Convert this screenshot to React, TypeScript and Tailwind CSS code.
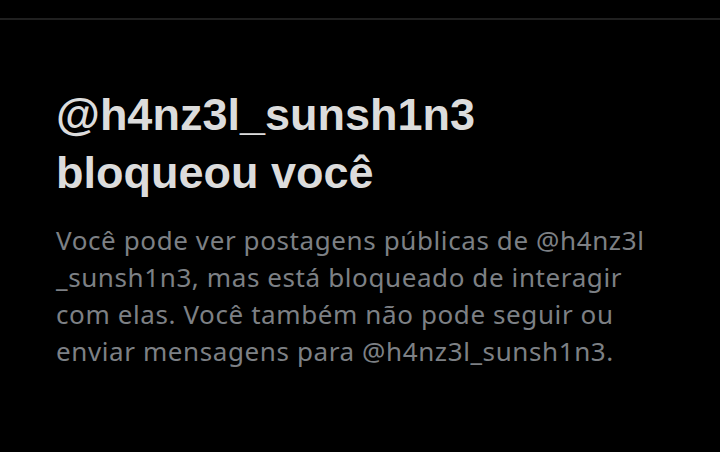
export default function App() {
  return (
    <div className="bg-black w-[720px] h-[452px] overflow-hidden flex flex-col">
      <div className="h-[18px]" />
      <div className="h-[2px] bg-[#202020]" />
      <div className="pl-[56px] pt-[66px] flex flex-col">
        <h1 className="font-['Liberation_Sans',Arial,sans-serif] font-bold text-[45px] leading-[58px] text-[#dcdcdc] whitespace-nowrap">
          @h4nz3l_sunsh1n3
          <br />
          bloqueou você
        </h1>
        <p className="mt-[20px] font-['Noto_Sans',sans-serif] text-[26px] leading-[37px] tracking-[0.6px] text-[#7d8085] whitespace-nowrap">
          Você pode ver postagens públicas de @h4nz3l
          <br />
          _sunsh1n3, mas está bloqueado de interagir
          <br />
          com elas. Você também não pode seguir ou
          <br />
          enviar mensagens para @h4nz3l_sunsh1n3.
        </p>
      </div>
    </div>
  );
}
